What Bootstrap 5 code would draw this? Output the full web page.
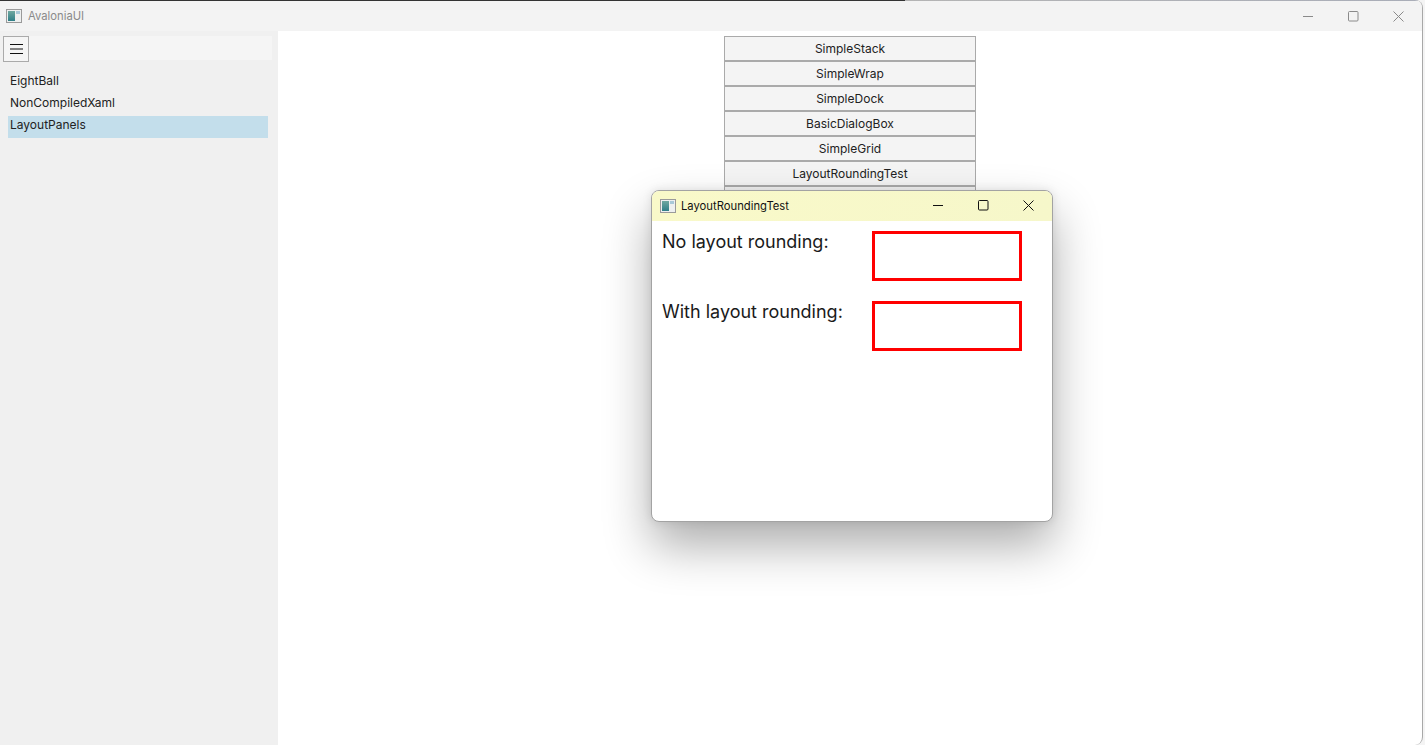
<!DOCTYPE html>
<html lang="en">
<head>
<meta charset="utf-8">
<title>AvaloniaUI</title>
<link href="https://cdn.jsdelivr.net/npm/bootstrap@5.3.0/dist/css/bootstrap.min.css" rel="stylesheet">
<style>
html,body{height:745px;overflow:hidden;background:#f4f4f4;margin:0}
body{font-family:Inter,"Liberation Sans",sans-serif;font-size:12px;line-height:15px;color:#222;position:relative}
.app-win{width:1423px;height:745px;background:#fff;border-right:1px solid #a8a8a8;border-top-right-radius:8px;border-bottom-right-radius:8px;overflow:hidden}
.top-line{height:1px;flex:none;background:linear-gradient(90deg,#333 0,#333 905px,#b4b4b4 905px,#a9adb8 100%)}
.app-title{height:30px;flex:none;background:#f3f3f3;color:#8a8a8a;padding:0 1px 0 6px;font-size:11.25px}
.app-title .ttl{margin-left:6px}
.wc{width:45px;height:30px}
.app-side{width:278px;background:#f0f0f0;padding:5px 6px 0 3px}
.tool-strip{height:24px;background:#f5f5f5;margin-top:1px;width:269px}
.burger{width:26px;height:26px;margin-top:-1px;background:#f5f5f5;border:1px solid #aaa;border-radius:0;padding:0}
.side-list{margin:12px 0 0 5px;width:260px}
.side-item{height:22px;padding:1px 2px 0;border:0;background:transparent;color:#222}
.side-item.on{background:#c3deeb}
.app-body{height:714px}
.stack-col{width:252px;padding-top:5px}
.stack-btn{height:26px;margin-top:-1px;line-height:22px;background:#f4f4f4;border:1px solid #aaa;border-bottom-width:2px;font-size:12px;color:#222;border-radius:0;padding:0;display:block;width:100%}
.stack-btn:first-child{margin-top:0}
.dlg{position:absolute;left:651px;top:190px;width:402px;height:332px;background:#fff;border:1px solid #a3a3a3;border-radius:8px;box-shadow:0 24px 48px rgba(0,0,0,.32),0 0 10px rgba(0,0,0,.1);overflow:hidden}
.dlg-title{height:30px;flex:none;background:linear-gradient(90deg,#f9f9c9,#f6f7ca);padding:0 1px 0 8px;color:#111;font-size:11.25px}
.dlg-title .ttl{margin-left:5px}
.dlg-title .wc{padding-bottom:2px}
.dlg-row{height:50px;margin-bottom:20px}
.dlg-body{padding:10px 0 0 10px}
.dlg-lbl{width:210px;font-size:18px;line-height:22px;color:#1a1a1a}
.red-box{width:150px;height:50px;border:3px solid #f00}
</style>
</head>
<body>
<div class="app-win d-flex flex-column">
  <div class="top-line"></div>
  <div class="app-title d-flex align-items-center">
    <svg width="16" height="14" viewBox="0 0 16 14"><defs><linearGradient id="g1" x1="0" y1="0" x2="0" y2="1"><stop offset="0" stop-color="#6fa8a0"/><stop offset="1" stop-color="#2f7f88"/></linearGradient></defs><rect x=".5" y=".5" width="15" height="13" fill="#eef0f0" stroke="#9a9a9a"/><rect x="2" y="2" width="7" height="10" fill="url(#g1)"/><rect x="10" y="2" width="4" height="3" fill="#a9c9d8"/></svg>
    <span class="ttl">AvaloniaUI</span>
    <div class="d-flex ms-auto">
      <div class="wc d-flex align-items-center justify-content-center"><svg width="11" height="11" viewBox="0 0 11 11"><path d="M0 5.5H10" stroke="#8a8a8a" fill="none"/></svg></div>
      <div class="wc d-flex align-items-center justify-content-center"><svg width="11" height="11" viewBox="0 0 11 11"><rect x=".5" y=".5" width="9.5" height="9.5" rx="1" stroke="#8a8a8a" fill="none"/></svg></div>
      <div class="wc d-flex align-items-center justify-content-center"><svg width="11" height="11" viewBox="0 0 11 11"><path d="M.5 .5L10.5 10.5M10.5 .5L.5 10.5" stroke="#8a8a8a" fill="none"/></svg></div>
    </div>
  </div>
  <div class="app-body d-flex">
    <div class="app-side">
      <div class="tool-strip">
        <button class="burger btn d-flex align-items-center justify-content-center" type="button" aria-label="menu"><svg width="14" height="12" viewBox="0 0 14 12"><path d="M1 1.5H14M1 6H14M1 10.5H14" stroke="#111" fill="none"/></svg></button>
      </div>
      <div class="side-list d-flex flex-column">
        <div class="side-item">EightBall</div>
        <div class="side-item">NonCompiledXaml</div>
        <div class="side-item on">LayoutPanels</div>
      </div>
    </div>
    <div class="flex-grow-1 d-flex justify-content-center">
      <div class="stack-col">
        <button class="stack-btn btn" type="button">SimpleStack</button>
        <button class="stack-btn btn" type="button">SimpleWrap</button>
        <button class="stack-btn btn" type="button">SimpleDock</button>
        <button class="stack-btn btn" type="button">BasicDialogBox</button>
        <button class="stack-btn btn" type="button">SimpleGrid</button>
        <button class="stack-btn btn" type="button">LayoutRoundingTest</button>
        <button class="stack-btn btn" type="button">&nbsp;</button>
      </div>
    </div>
  </div>
</div>
<div class="dlg d-flex flex-column">
  <div class="dlg-title d-flex align-items-center">
    <svg width="16" height="14" viewBox="0 0 16 14"><defs><linearGradient id="g2" x1="0" y1="0" x2="0" y2="1"><stop offset="0" stop-color="#6fa8a0"/><stop offset="1" stop-color="#2f7f88"/></linearGradient></defs><rect x=".5" y=".5" width="15" height="13" fill="#eef0f0" stroke="#9a9a9a"/><rect x="2" y="2" width="7" height="10" fill="url(#g2)"/><rect x="10" y="2" width="4" height="3" fill="#a9c9d8"/></svg>
    <span class="ttl">LayoutRoundingTest</span>
    <div class="d-flex ms-auto">
      <div class="wc d-flex align-items-center justify-content-center"><svg width="11" height="11" viewBox="0 0 11 11"><path d="M0 5.5H10" stroke="#111" fill="none"/></svg></div>
      <div class="wc d-flex align-items-center justify-content-center"><svg width="11" height="11" viewBox="0 0 11 11"><rect x=".5" y=".5" width="9.5" height="9.5" rx="1" stroke="#111" fill="none"/></svg></div>
      <div class="wc d-flex align-items-center justify-content-center"><svg width="11" height="11" viewBox="0 0 11 11"><path d="M.5 .5L10.5 10.5M10.5 .5L.5 10.5" stroke="#111" fill="none"/></svg></div>
    </div>
  </div>
  <div class="dlg-body">
    <div class="dlg-row d-flex"><div class="dlg-lbl">No layout rounding:</div><div class="red-box"></div></div>
    <div class="dlg-row d-flex"><div class="dlg-lbl">With layout rounding:</div><div class="red-box"></div></div>
  </div>
</div>
</body>
</html>
